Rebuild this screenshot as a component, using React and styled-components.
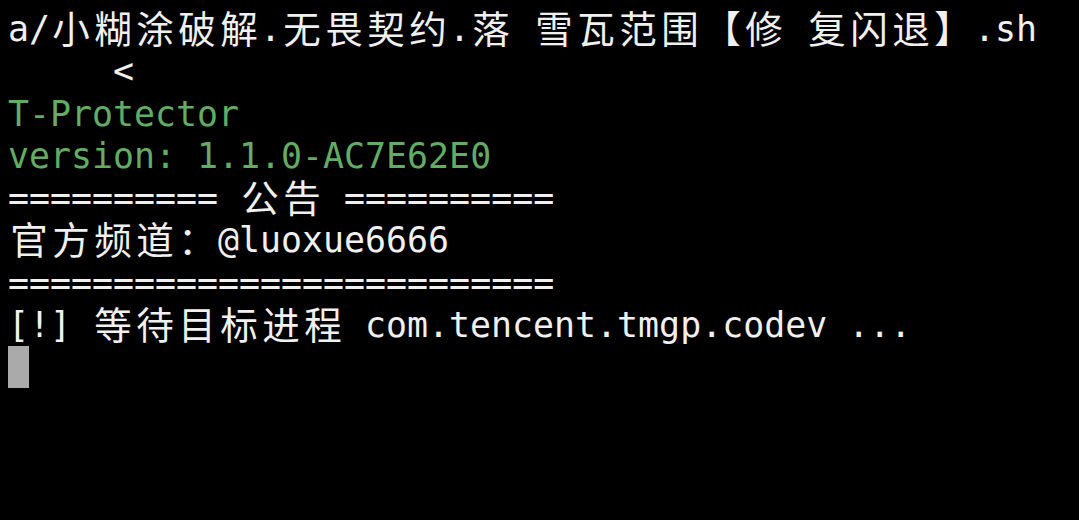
import React from "react";
import styled, { createGlobalStyle } from "styled-components";

const Global = createGlobalStyle`
  html, body {
    margin: 0;
    padding: 0;
    background: #000;
  }
  #root {
    min-height: 100vh;
    background: #000;
  }
`;

const Screen = styled.div`
  box-sizing: border-box;
  min-height: 100vh;
  padding: 8px;
  background: #000;
  color: #f0f0f0;
  font-family: "DejaVu Sans Mono", "Noto Sans CJK SC", monospace;
  font-size: 34.9px;
  line-height: 42.25px;
  display: flex;
  flex-direction: column;
`;

const Line = styled.div`
  white-space: pre;
  height: 42.25px;
  overflow: visible;
  color: ${(p) => (p.$tone === "green" ? "#62ad62" : "#f0f0f0")};
`;

const Wide = styled.span`
  display: inline-block;
  width: 42px;
  height: 42.25px;
  vertical-align: top;
  text-align: center;
  font-size: 37.5px;
  line-height: 44px;
`;

const Cursor = styled.div`
  width: 21px;
  height: 42px;
  background: #aaaaaa;
`;

const WIDE_RE = /[\u2E80-\u9FFF\u3000-\u303F\uFF00-\uFFEF\u3010\u3011]/;

function TermText({ text }) {
  const parts = [];
  let buf = "";
  let key = 0;
  for (const ch of text) {
    if (WIDE_RE.test(ch)) {
      if (buf) {
        parts.push(<span key={key++}>{buf}</span>);
        buf = "";
      }
      parts.push(<Wide key={key++}>{ch}</Wide>);
    } else {
      buf += ch;
    }
  }
  if (buf) parts.push(<span key={key++}>{buf}</span>);
  return parts;
}

const lines = [
  { text: "a/小糊涂破解.无畏契约.落 雪瓦范围【修 复闪退】.sh" },
  { text: "     <" },
  { text: "T-Protector", tone: "green" },
  { text: "version: 1.1.0-AC7E62E0", tone: "green" },
  { text: "========== 公告 ==========" },
  { text: "官方频道：@luoxue6666" },
  { text: "==========================" },
  { text: "[!] 等待目标进程 com.tencent.tmgp.codev ..." },
];

export default function App() {
  return (
    <>
      <Global />
      <Screen>
        {lines.map((l, i) => (
          <Line key={i} $tone={l.tone}>
            <TermText text={l.text} />
          </Line>
        ))}
        <Cursor />
      </Screen>
    </>
  );
}
